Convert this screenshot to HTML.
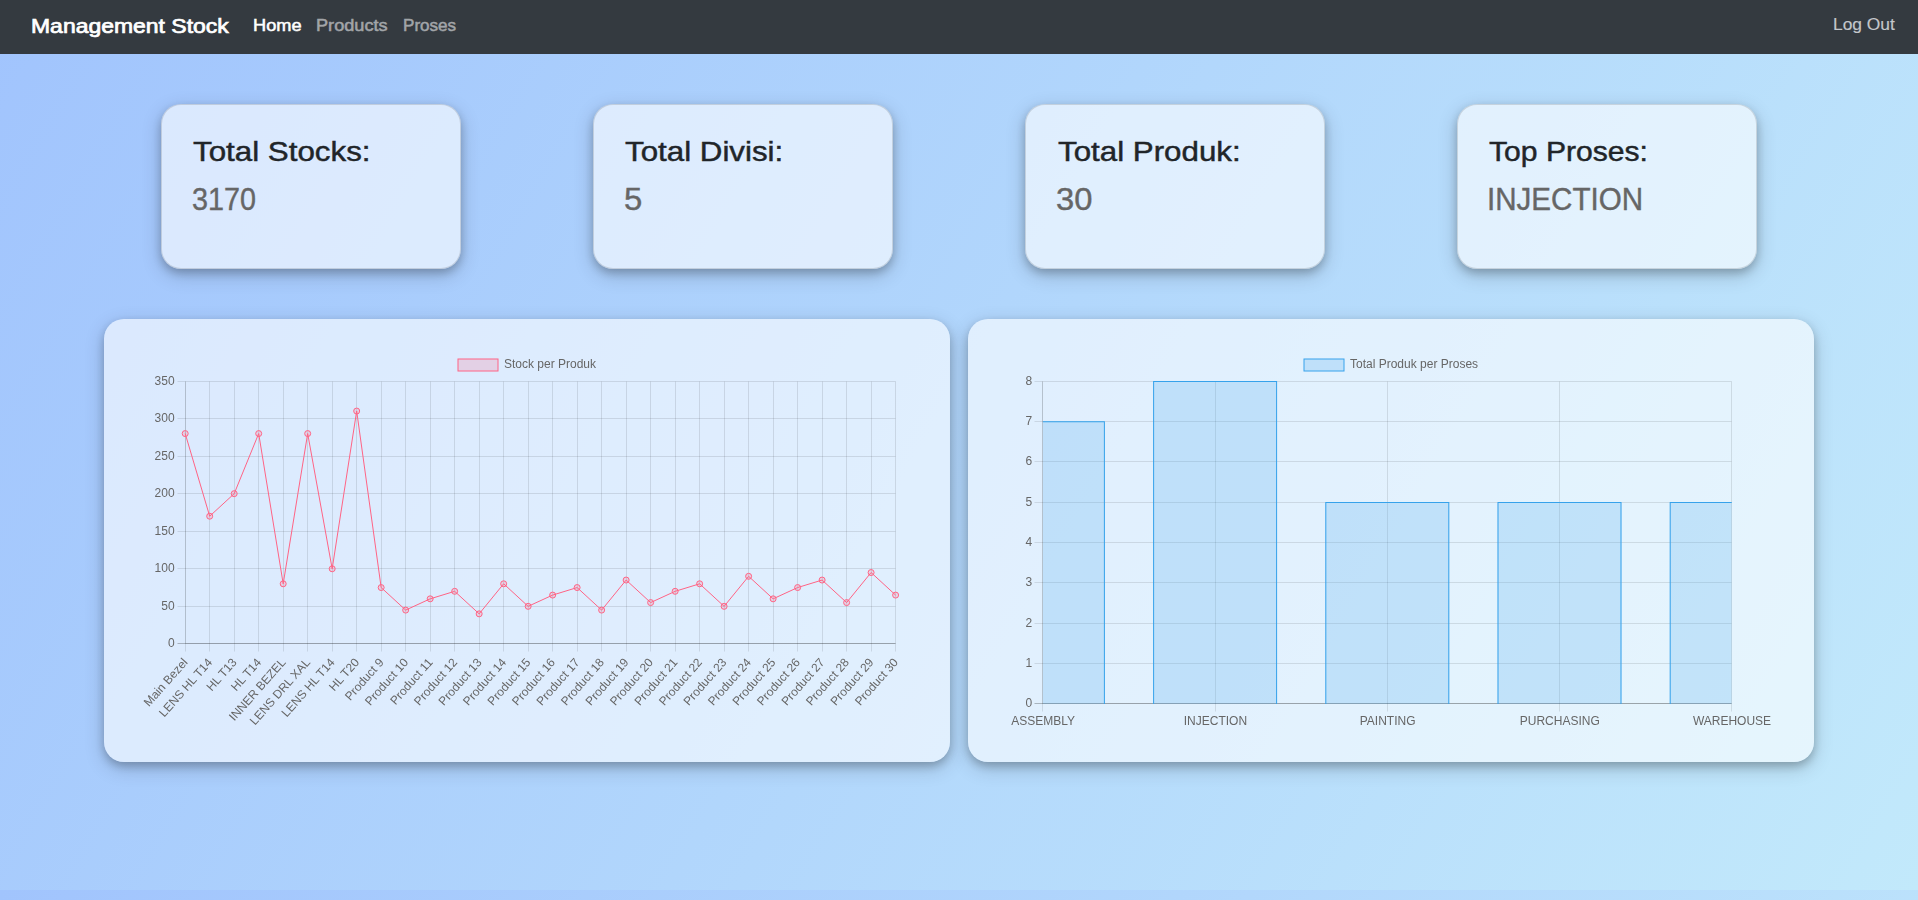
<!DOCTYPE html><html><head><meta charset="utf-8"><style>
html,body{margin:0;padding:0;}
html{background:#a1c4fd;}
body{width:1918px;height:900px;position:relative;overflow:hidden;font-family:"Liberation Sans",sans-serif;
background-image:linear-gradient(120deg,#a1c4fd 0%,#c2e9fb 100%);background-size:1918px 890px;background-repeat:repeat;}
.nav{position:absolute;left:0;top:0;width:1918px;height:54px;background:#343a40;}
.t{position:absolute;white-space:nowrap;transform-origin:0 0;}
.card{position:absolute;box-sizing:border-box;border:1px solid rgba(0,0,0,0.125);background:rgba(255,255,255,0.6);border-radius:20px;box-shadow:0 4px 8px 0 rgba(0,0,0,0.2), 0 6px 20px 0 rgba(0,0,0,0.19);}
svg{position:absolute;left:0;top:0;will-change:transform;}
</style></head><body>
<div class="nav"></div>

<div class="t" style="left:31.10px;top:15.03px;font-size:19.5px;line-height:22.42px;font-weight:normal;color:#ffffff;-webkit-text-stroke:0.7px #ffffff;transform:scaleX(1.1769)">Management Stock</div>
<div class="t" style="left:252.60px;top:16.56px;font-size:16px;line-height:18.40px;font-weight:normal;color:#ffffff;-webkit-text-stroke:0.5px #ffffff;transform:scaleX(1.1372)">Home</div>
<div class="t" style="left:315.90px;top:16.56px;font-size:16px;line-height:18.40px;font-weight:normal;color:#a2a5a9;-webkit-text-stroke:0.5px #a2a5a9;transform:scaleX(1.1333)">Products</div>
<div class="t" style="left:402.90px;top:16.56px;font-size:16px;line-height:18.40px;font-weight:normal;color:#a2a5a9;-webkit-text-stroke:0.5px #a2a5a9;transform:scaleX(1.0660)">Proses</div>
<div class="t" style="left:1833.30px;top:16.36px;font-size:16px;line-height:18.40px;font-weight:normal;color:#c4c7cb;-webkit-text-stroke:0.15px #c4c7cb;transform:scaleX(1.0862)">Log Out</div>
<div class="card" style="left:161px;top:104px;width:300px;height:165px"></div>
<div class="card" style="left:593px;top:104px;width:300px;height:165px"></div>
<div class="card" style="left:1025px;top:104px;width:300px;height:165px"></div>
<div class="card" style="left:1457px;top:104px;width:300px;height:165px"></div>
<div class="t" style="left:193.00px;top:135.92px;font-size:27.5px;line-height:31.62px;font-weight:normal;color:#212529;-webkit-text-stroke:0.45px #212529;transform:scaleX(1.1385)">Total Stocks:</div>
<div class="t" style="left:192.00px;top:180.77px;font-size:32px;line-height:36.80px;font-weight:normal;color:#666666;-webkit-text-stroke:0.4px #666666;transform:scaleX(0.8986)">3170</div>
<div class="t" style="left:625.30px;top:135.92px;font-size:27.5px;line-height:31.62px;font-weight:normal;color:#212529;-webkit-text-stroke:0.45px #212529;transform:scaleX(1.1381)">Total Divisi:</div>
<div class="t" style="left:624.40px;top:180.77px;font-size:32px;line-height:36.80px;font-weight:normal;color:#666666;-webkit-text-stroke:0.4px #666666;transform:scaleX(1.0278)">5</div>
<div class="t" style="left:1057.60px;top:135.92px;font-size:27.5px;line-height:31.62px;font-weight:normal;color:#212529;-webkit-text-stroke:0.45px #212529;transform:scaleX(1.1379)">Total Produk:</div>
<div class="t" style="left:1056.00px;top:180.77px;font-size:32px;line-height:36.80px;font-weight:normal;color:#666666;-webkit-text-stroke:0.4px #666666;transform:scaleX(1.0222)">30</div>
<div class="t" style="left:1488.90px;top:135.76px;font-size:27.5px;line-height:31.62px;font-weight:normal;color:#212529;-webkit-text-stroke:0.45px #212529;transform:scaleX(1.0945)">Top Proses:</div>
<div class="t" style="left:1487.40px;top:182.15px;font-size:30.5px;line-height:35.07px;font-weight:normal;color:#666666;-webkit-text-stroke:0.4px #666666;transform:scaleX(0.9696)">INJECTION</div>
<div class="card" style="border:0;left:104px;top:319px;width:846px;height:443px"></div>
<div class="card" style="border:0;left:968px;top:319px;width:846px;height:443px"></div>
<svg width="1918" height="900" font-family="Liberation Sans, sans-serif" font-size="12" fill="#666">
<line x1="177.5" y1="381.5" x2="895.5" y2="381.5" stroke="rgba(0,0,0,0.1)" stroke-width="1"/>
<text x="174.60" y="384.50" text-anchor="end">350</text>
<line x1="177.5" y1="418.5" x2="895.5" y2="418.5" stroke="rgba(0,0,0,0.1)" stroke-width="1"/>
<text x="174.60" y="421.50" text-anchor="end">300</text>
<line x1="177.5" y1="456.5" x2="895.5" y2="456.5" stroke="rgba(0,0,0,0.1)" stroke-width="1"/>
<text x="174.60" y="459.50" text-anchor="end">250</text>
<line x1="177.5" y1="493.5" x2="895.5" y2="493.5" stroke="rgba(0,0,0,0.1)" stroke-width="1"/>
<text x="174.60" y="496.50" text-anchor="end">200</text>
<line x1="177.5" y1="531.5" x2="895.5" y2="531.5" stroke="rgba(0,0,0,0.1)" stroke-width="1"/>
<text x="174.60" y="534.50" text-anchor="end">150</text>
<line x1="177.5" y1="568.5" x2="895.5" y2="568.5" stroke="rgba(0,0,0,0.1)" stroke-width="1"/>
<text x="174.60" y="571.50" text-anchor="end">100</text>
<line x1="177.5" y1="606.5" x2="895.5" y2="606.5" stroke="rgba(0,0,0,0.1)" stroke-width="1"/>
<text x="174.60" y="609.50" text-anchor="end">50</text>
<line x1="177.5" y1="643.5" x2="895.5" y2="643.5" stroke="rgba(0,0,0,0.25)" stroke-width="1"/>
<text x="174.60" y="646.50" text-anchor="end">0</text>
<line x1="185.5" y1="381.5" x2="185.5" y2="651.5" stroke="rgba(0,0,0,0.1)" stroke-width="1"/>
<text transform="translate(185.20,659.9) rotate(-48.5)" x="0" y="4.2" text-anchor="end">Main Bezel</text>
<line x1="209.5" y1="381.5" x2="209.5" y2="651.5" stroke="rgba(0,0,0,0.1)" stroke-width="1"/>
<text transform="translate(209.70,659.9) rotate(-48.5)" x="0" y="4.2" text-anchor="end">LENS HL T14</text>
<line x1="234.5" y1="381.5" x2="234.5" y2="651.5" stroke="rgba(0,0,0,0.1)" stroke-width="1"/>
<text transform="translate(234.19,659.9) rotate(-48.5)" x="0" y="4.2" text-anchor="end">HL T13</text>
<line x1="258.5" y1="381.5" x2="258.5" y2="651.5" stroke="rgba(0,0,0,0.1)" stroke-width="1"/>
<text transform="translate(258.69,659.9) rotate(-48.5)" x="0" y="4.2" text-anchor="end">HL T14</text>
<line x1="283.5" y1="381.5" x2="283.5" y2="651.5" stroke="rgba(0,0,0,0.1)" stroke-width="1"/>
<text transform="translate(283.19,659.9) rotate(-48.5)" x="0" y="4.2" text-anchor="end">INNER BEZEL</text>
<line x1="307.5" y1="381.5" x2="307.5" y2="651.5" stroke="rgba(0,0,0,0.1)" stroke-width="1"/>
<text transform="translate(307.68,659.9) rotate(-48.5)" x="0" y="4.2" text-anchor="end">LENS DRL XAL</text>
<line x1="332.5" y1="381.5" x2="332.5" y2="651.5" stroke="rgba(0,0,0,0.1)" stroke-width="1"/>
<text transform="translate(332.18,659.9) rotate(-48.5)" x="0" y="4.2" text-anchor="end">LENS HL T14</text>
<line x1="356.5" y1="381.5" x2="356.5" y2="651.5" stroke="rgba(0,0,0,0.1)" stroke-width="1"/>
<text transform="translate(356.68,659.9) rotate(-48.5)" x="0" y="4.2" text-anchor="end">HL T20</text>
<line x1="381.5" y1="381.5" x2="381.5" y2="651.5" stroke="rgba(0,0,0,0.1)" stroke-width="1"/>
<text transform="translate(381.17,659.9) rotate(-48.5)" x="0" y="4.2" text-anchor="end">Product 9</text>
<line x1="405.5" y1="381.5" x2="405.5" y2="651.5" stroke="rgba(0,0,0,0.1)" stroke-width="1"/>
<text transform="translate(405.67,659.9) rotate(-48.5)" x="0" y="4.2" text-anchor="end">Product 10</text>
<line x1="430.5" y1="381.5" x2="430.5" y2="651.5" stroke="rgba(0,0,0,0.1)" stroke-width="1"/>
<text transform="translate(430.17,659.9) rotate(-48.5)" x="0" y="4.2" text-anchor="end">Product 11</text>
<line x1="454.5" y1="381.5" x2="454.5" y2="651.5" stroke="rgba(0,0,0,0.1)" stroke-width="1"/>
<text transform="translate(454.66,659.9) rotate(-48.5)" x="0" y="4.2" text-anchor="end">Product 12</text>
<line x1="479.5" y1="381.5" x2="479.5" y2="651.5" stroke="rgba(0,0,0,0.1)" stroke-width="1"/>
<text transform="translate(479.16,659.9) rotate(-48.5)" x="0" y="4.2" text-anchor="end">Product 13</text>
<line x1="503.5" y1="381.5" x2="503.5" y2="651.5" stroke="rgba(0,0,0,0.1)" stroke-width="1"/>
<text transform="translate(503.66,659.9) rotate(-48.5)" x="0" y="4.2" text-anchor="end">Product 14</text>
<line x1="528.5" y1="381.5" x2="528.5" y2="651.5" stroke="rgba(0,0,0,0.1)" stroke-width="1"/>
<text transform="translate(528.15,659.9) rotate(-48.5)" x="0" y="4.2" text-anchor="end">Product 15</text>
<line x1="552.5" y1="381.5" x2="552.5" y2="651.5" stroke="rgba(0,0,0,0.1)" stroke-width="1"/>
<text transform="translate(552.65,659.9) rotate(-48.5)" x="0" y="4.2" text-anchor="end">Product 16</text>
<line x1="577.5" y1="381.5" x2="577.5" y2="651.5" stroke="rgba(0,0,0,0.1)" stroke-width="1"/>
<text transform="translate(577.14,659.9) rotate(-48.5)" x="0" y="4.2" text-anchor="end">Product 17</text>
<line x1="601.5" y1="381.5" x2="601.5" y2="651.5" stroke="rgba(0,0,0,0.1)" stroke-width="1"/>
<text transform="translate(601.64,659.9) rotate(-48.5)" x="0" y="4.2" text-anchor="end">Product 18</text>
<line x1="626.5" y1="381.5" x2="626.5" y2="651.5" stroke="rgba(0,0,0,0.1)" stroke-width="1"/>
<text transform="translate(626.14,659.9) rotate(-48.5)" x="0" y="4.2" text-anchor="end">Product 19</text>
<line x1="650.5" y1="381.5" x2="650.5" y2="651.5" stroke="rgba(0,0,0,0.1)" stroke-width="1"/>
<text transform="translate(650.63,659.9) rotate(-48.5)" x="0" y="4.2" text-anchor="end">Product 20</text>
<line x1="675.5" y1="381.5" x2="675.5" y2="651.5" stroke="rgba(0,0,0,0.1)" stroke-width="1"/>
<text transform="translate(675.13,659.9) rotate(-48.5)" x="0" y="4.2" text-anchor="end">Product 21</text>
<line x1="699.5" y1="381.5" x2="699.5" y2="651.5" stroke="rgba(0,0,0,0.1)" stroke-width="1"/>
<text transform="translate(699.63,659.9) rotate(-48.5)" x="0" y="4.2" text-anchor="end">Product 22</text>
<line x1="724.5" y1="381.5" x2="724.5" y2="651.5" stroke="rgba(0,0,0,0.1)" stroke-width="1"/>
<text transform="translate(724.12,659.9) rotate(-48.5)" x="0" y="4.2" text-anchor="end">Product 23</text>
<line x1="748.5" y1="381.5" x2="748.5" y2="651.5" stroke="rgba(0,0,0,0.1)" stroke-width="1"/>
<text transform="translate(748.62,659.9) rotate(-48.5)" x="0" y="4.2" text-anchor="end">Product 24</text>
<line x1="773.5" y1="381.5" x2="773.5" y2="651.5" stroke="rgba(0,0,0,0.1)" stroke-width="1"/>
<text transform="translate(773.12,659.9) rotate(-48.5)" x="0" y="4.2" text-anchor="end">Product 25</text>
<line x1="797.5" y1="381.5" x2="797.5" y2="651.5" stroke="rgba(0,0,0,0.1)" stroke-width="1"/>
<text transform="translate(797.61,659.9) rotate(-48.5)" x="0" y="4.2" text-anchor="end">Product 26</text>
<line x1="822.5" y1="381.5" x2="822.5" y2="651.5" stroke="rgba(0,0,0,0.1)" stroke-width="1"/>
<text transform="translate(822.11,659.9) rotate(-48.5)" x="0" y="4.2" text-anchor="end">Product 27</text>
<line x1="846.5" y1="381.5" x2="846.5" y2="651.5" stroke="rgba(0,0,0,0.1)" stroke-width="1"/>
<text transform="translate(846.61,659.9) rotate(-48.5)" x="0" y="4.2" text-anchor="end">Product 28</text>
<line x1="871.5" y1="381.5" x2="871.5" y2="651.5" stroke="rgba(0,0,0,0.1)" stroke-width="1"/>
<text transform="translate(871.10,659.9) rotate(-48.5)" x="0" y="4.2" text-anchor="end">Product 29</text>
<line x1="895.5" y1="381.5" x2="895.5" y2="651.5" stroke="rgba(0,0,0,0.1)" stroke-width="1"/>
<text transform="translate(895.60,659.9) rotate(-48.5)" x="0" y="4.2" text-anchor="end">Product 30</text>
<line x1="185.5" y1="381.5" x2="185.5" y2="643.5" stroke="rgba(0,0,0,0.1)"/>
<line x1="185.5" y1="643.5" x2="895.5" y2="643.5" stroke="rgba(0,0,0,0.1)"/>
<polyline points="185.20,433.58 209.70,516.21 234.19,493.67 258.69,433.58 283.19,583.81 307.68,433.58 332.18,568.79 356.68,411.05 381.17,587.56 405.67,610.10 430.17,598.83 454.66,591.32 479.16,613.85 503.66,583.81 528.15,606.34 552.65,595.08 577.14,587.56 601.64,610.10 626.14,580.05 650.63,602.59 675.13,591.32 699.63,583.81 724.12,606.34 748.62,576.30 773.12,598.83 797.61,587.56 822.11,580.05 846.61,602.59 871.10,572.54 895.60,595.08" fill="none" stroke="rgb(255,99,132)" stroke-width="1"/>
<circle cx="185.20" cy="433.58" r="3" fill="rgba(255,99,132,0.2)" stroke="rgb(255,99,132)" stroke-width="1"/>
<circle cx="209.70" cy="516.21" r="3" fill="rgba(255,99,132,0.2)" stroke="rgb(255,99,132)" stroke-width="1"/>
<circle cx="234.19" cy="493.67" r="3" fill="rgba(255,99,132,0.2)" stroke="rgb(255,99,132)" stroke-width="1"/>
<circle cx="258.69" cy="433.58" r="3" fill="rgba(255,99,132,0.2)" stroke="rgb(255,99,132)" stroke-width="1"/>
<circle cx="283.19" cy="583.81" r="3" fill="rgba(255,99,132,0.2)" stroke="rgb(255,99,132)" stroke-width="1"/>
<circle cx="307.68" cy="433.58" r="3" fill="rgba(255,99,132,0.2)" stroke="rgb(255,99,132)" stroke-width="1"/>
<circle cx="332.18" cy="568.79" r="3" fill="rgba(255,99,132,0.2)" stroke="rgb(255,99,132)" stroke-width="1"/>
<circle cx="356.68" cy="411.05" r="3" fill="rgba(255,99,132,0.2)" stroke="rgb(255,99,132)" stroke-width="1"/>
<circle cx="381.17" cy="587.56" r="3" fill="rgba(255,99,132,0.2)" stroke="rgb(255,99,132)" stroke-width="1"/>
<circle cx="405.67" cy="610.10" r="3" fill="rgba(255,99,132,0.2)" stroke="rgb(255,99,132)" stroke-width="1"/>
<circle cx="430.17" cy="598.83" r="3" fill="rgba(255,99,132,0.2)" stroke="rgb(255,99,132)" stroke-width="1"/>
<circle cx="454.66" cy="591.32" r="3" fill="rgba(255,99,132,0.2)" stroke="rgb(255,99,132)" stroke-width="1"/>
<circle cx="479.16" cy="613.85" r="3" fill="rgba(255,99,132,0.2)" stroke="rgb(255,99,132)" stroke-width="1"/>
<circle cx="503.66" cy="583.81" r="3" fill="rgba(255,99,132,0.2)" stroke="rgb(255,99,132)" stroke-width="1"/>
<circle cx="528.15" cy="606.34" r="3" fill="rgba(255,99,132,0.2)" stroke="rgb(255,99,132)" stroke-width="1"/>
<circle cx="552.65" cy="595.08" r="3" fill="rgba(255,99,132,0.2)" stroke="rgb(255,99,132)" stroke-width="1"/>
<circle cx="577.14" cy="587.56" r="3" fill="rgba(255,99,132,0.2)" stroke="rgb(255,99,132)" stroke-width="1"/>
<circle cx="601.64" cy="610.10" r="3" fill="rgba(255,99,132,0.2)" stroke="rgb(255,99,132)" stroke-width="1"/>
<circle cx="626.14" cy="580.05" r="3" fill="rgba(255,99,132,0.2)" stroke="rgb(255,99,132)" stroke-width="1"/>
<circle cx="650.63" cy="602.59" r="3" fill="rgba(255,99,132,0.2)" stroke="rgb(255,99,132)" stroke-width="1"/>
<circle cx="675.13" cy="591.32" r="3" fill="rgba(255,99,132,0.2)" stroke="rgb(255,99,132)" stroke-width="1"/>
<circle cx="699.63" cy="583.81" r="3" fill="rgba(255,99,132,0.2)" stroke="rgb(255,99,132)" stroke-width="1"/>
<circle cx="724.12" cy="606.34" r="3" fill="rgba(255,99,132,0.2)" stroke="rgb(255,99,132)" stroke-width="1"/>
<circle cx="748.62" cy="576.30" r="3" fill="rgba(255,99,132,0.2)" stroke="rgb(255,99,132)" stroke-width="1"/>
<circle cx="773.12" cy="598.83" r="3" fill="rgba(255,99,132,0.2)" stroke="rgb(255,99,132)" stroke-width="1"/>
<circle cx="797.61" cy="587.56" r="3" fill="rgba(255,99,132,0.2)" stroke="rgb(255,99,132)" stroke-width="1"/>
<circle cx="822.11" cy="580.05" r="3" fill="rgba(255,99,132,0.2)" stroke="rgb(255,99,132)" stroke-width="1"/>
<circle cx="846.61" cy="602.59" r="3" fill="rgba(255,99,132,0.2)" stroke="rgb(255,99,132)" stroke-width="1"/>
<circle cx="871.10" cy="572.54" r="3" fill="rgba(255,99,132,0.2)" stroke="rgb(255,99,132)" stroke-width="1"/>
<circle cx="895.60" cy="595.08" r="3" fill="rgba(255,99,132,0.2)" stroke="rgb(255,99,132)" stroke-width="1"/>
<rect x="458" y="359" width="40" height="12" fill="rgba(255,99,132,0.2)" stroke="rgb(255,99,132)" stroke-width="1"/>
<text x="504" y="368">Stock per Produk</text>
<line x1="1034.5" y1="381.5" x2="1731.5" y2="381.5" stroke="rgba(0,0,0,0.1)" stroke-width="1"/>
<text x="1032.30" y="384.70" text-anchor="end">8</text>
<line x1="1034.5" y1="421.5" x2="1731.5" y2="421.5" stroke="rgba(0,0,0,0.1)" stroke-width="1"/>
<text x="1032.30" y="424.70" text-anchor="end">7</text>
<line x1="1034.5" y1="461.5" x2="1731.5" y2="461.5" stroke="rgba(0,0,0,0.1)" stroke-width="1"/>
<text x="1032.30" y="464.70" text-anchor="end">6</text>
<line x1="1034.5" y1="502.5" x2="1731.5" y2="502.5" stroke="rgba(0,0,0,0.1)" stroke-width="1"/>
<text x="1032.30" y="505.70" text-anchor="end">5</text>
<line x1="1034.5" y1="542.5" x2="1731.5" y2="542.5" stroke="rgba(0,0,0,0.1)" stroke-width="1"/>
<text x="1032.30" y="545.70" text-anchor="end">4</text>
<line x1="1034.5" y1="582.5" x2="1731.5" y2="582.5" stroke="rgba(0,0,0,0.1)" stroke-width="1"/>
<text x="1032.30" y="585.70" text-anchor="end">3</text>
<line x1="1034.5" y1="623.5" x2="1731.5" y2="623.5" stroke="rgba(0,0,0,0.1)" stroke-width="1"/>
<text x="1032.30" y="626.70" text-anchor="end">2</text>
<line x1="1034.5" y1="663.5" x2="1731.5" y2="663.5" stroke="rgba(0,0,0,0.1)" stroke-width="1"/>
<text x="1032.30" y="666.70" text-anchor="end">1</text>
<line x1="1034.5" y1="703.5" x2="1731.5" y2="703.5" stroke="rgba(0,0,0,0.25)" stroke-width="1"/>
<text x="1032.30" y="706.70" text-anchor="end">0</text>
<line x1="1042.5" y1="381.5" x2="1042.5" y2="711.5" stroke="rgba(0,0,0,0.1)" stroke-width="1"/>
<text x="1043.20" y="725" text-anchor="middle">ASSEMBLY</text>
<line x1="1215.5" y1="381.5" x2="1215.5" y2="711.5" stroke="rgba(0,0,0,0.1)" stroke-width="1"/>
<text x="1215.40" y="725" text-anchor="middle">INJECTION</text>
<line x1="1387.5" y1="381.5" x2="1387.5" y2="711.5" stroke="rgba(0,0,0,0.1)" stroke-width="1"/>
<text x="1387.60" y="725" text-anchor="middle">PAINTING</text>
<line x1="1559.5" y1="381.5" x2="1559.5" y2="711.5" stroke="rgba(0,0,0,0.1)" stroke-width="1"/>
<text x="1559.80" y="725" text-anchor="middle">PURCHASING</text>
<line x1="1731.5" y1="381.5" x2="1731.5" y2="711.5" stroke="rgba(0,0,0,0.1)" stroke-width="1"/>
<text x="1732.00" y="725" text-anchor="middle">WAREHOUSE</text>
<line x1="1042.5" y1="381.5" x2="1042.5" y2="703.5" stroke="rgba(0,0,0,0.1)"/>
<line x1="1042.5" y1="703.5" x2="1731.5" y2="703.5" stroke="rgba(0,0,0,0.1)"/>
<clipPath id="bc"><rect x="1042.9" y="0" width="688.8" height="900"/></clipPath><g clip-path="url(#bc)">
<rect x="980.91" y="421.36" width="123.98" height="282.54" fill="rgba(54,162,235,0.2)"/>
<path d="M980.91,421.36h123.98v282.54h-123.98z M981.91,422.36h121.98v281.54h-121.98z" fill="rgb(54,162,235)" fill-rule="evenodd"/>
<rect x="1153.11" y="381.00" width="123.98" height="322.90" fill="rgba(54,162,235,0.2)"/>
<path d="M1153.11,381.00h123.98v322.90h-123.98z M1154.11,382.00h121.98v321.90h-121.98z" fill="rgb(54,162,235)" fill-rule="evenodd"/>
<rect x="1325.31" y="502.09" width="123.98" height="201.81" fill="rgba(54,162,235,0.2)"/>
<path d="M1325.31,502.09h123.98v201.81h-123.98z M1326.31,503.09h121.98v200.81h-121.98z" fill="rgb(54,162,235)" fill-rule="evenodd"/>
<rect x="1497.51" y="502.09" width="123.98" height="201.81" fill="rgba(54,162,235,0.2)"/>
<path d="M1497.51,502.09h123.98v201.81h-123.98z M1498.51,503.09h121.98v200.81h-121.98z" fill="rgb(54,162,235)" fill-rule="evenodd"/>
<rect x="1669.71" y="502.09" width="123.98" height="201.81" fill="rgba(54,162,235,0.2)"/>
<path d="M1669.71,502.09h123.98v201.81h-123.98z M1670.71,503.09h121.98v200.81h-121.98z" fill="rgb(54,162,235)" fill-rule="evenodd"/>
</g>
<rect x="1304" y="359" width="40" height="12" fill="rgba(54,162,235,0.2)" stroke="rgb(54,162,235)" stroke-width="1"/>
<text x="1350" y="368">Total Produk per Proses</text>
</svg>
</body></html>
